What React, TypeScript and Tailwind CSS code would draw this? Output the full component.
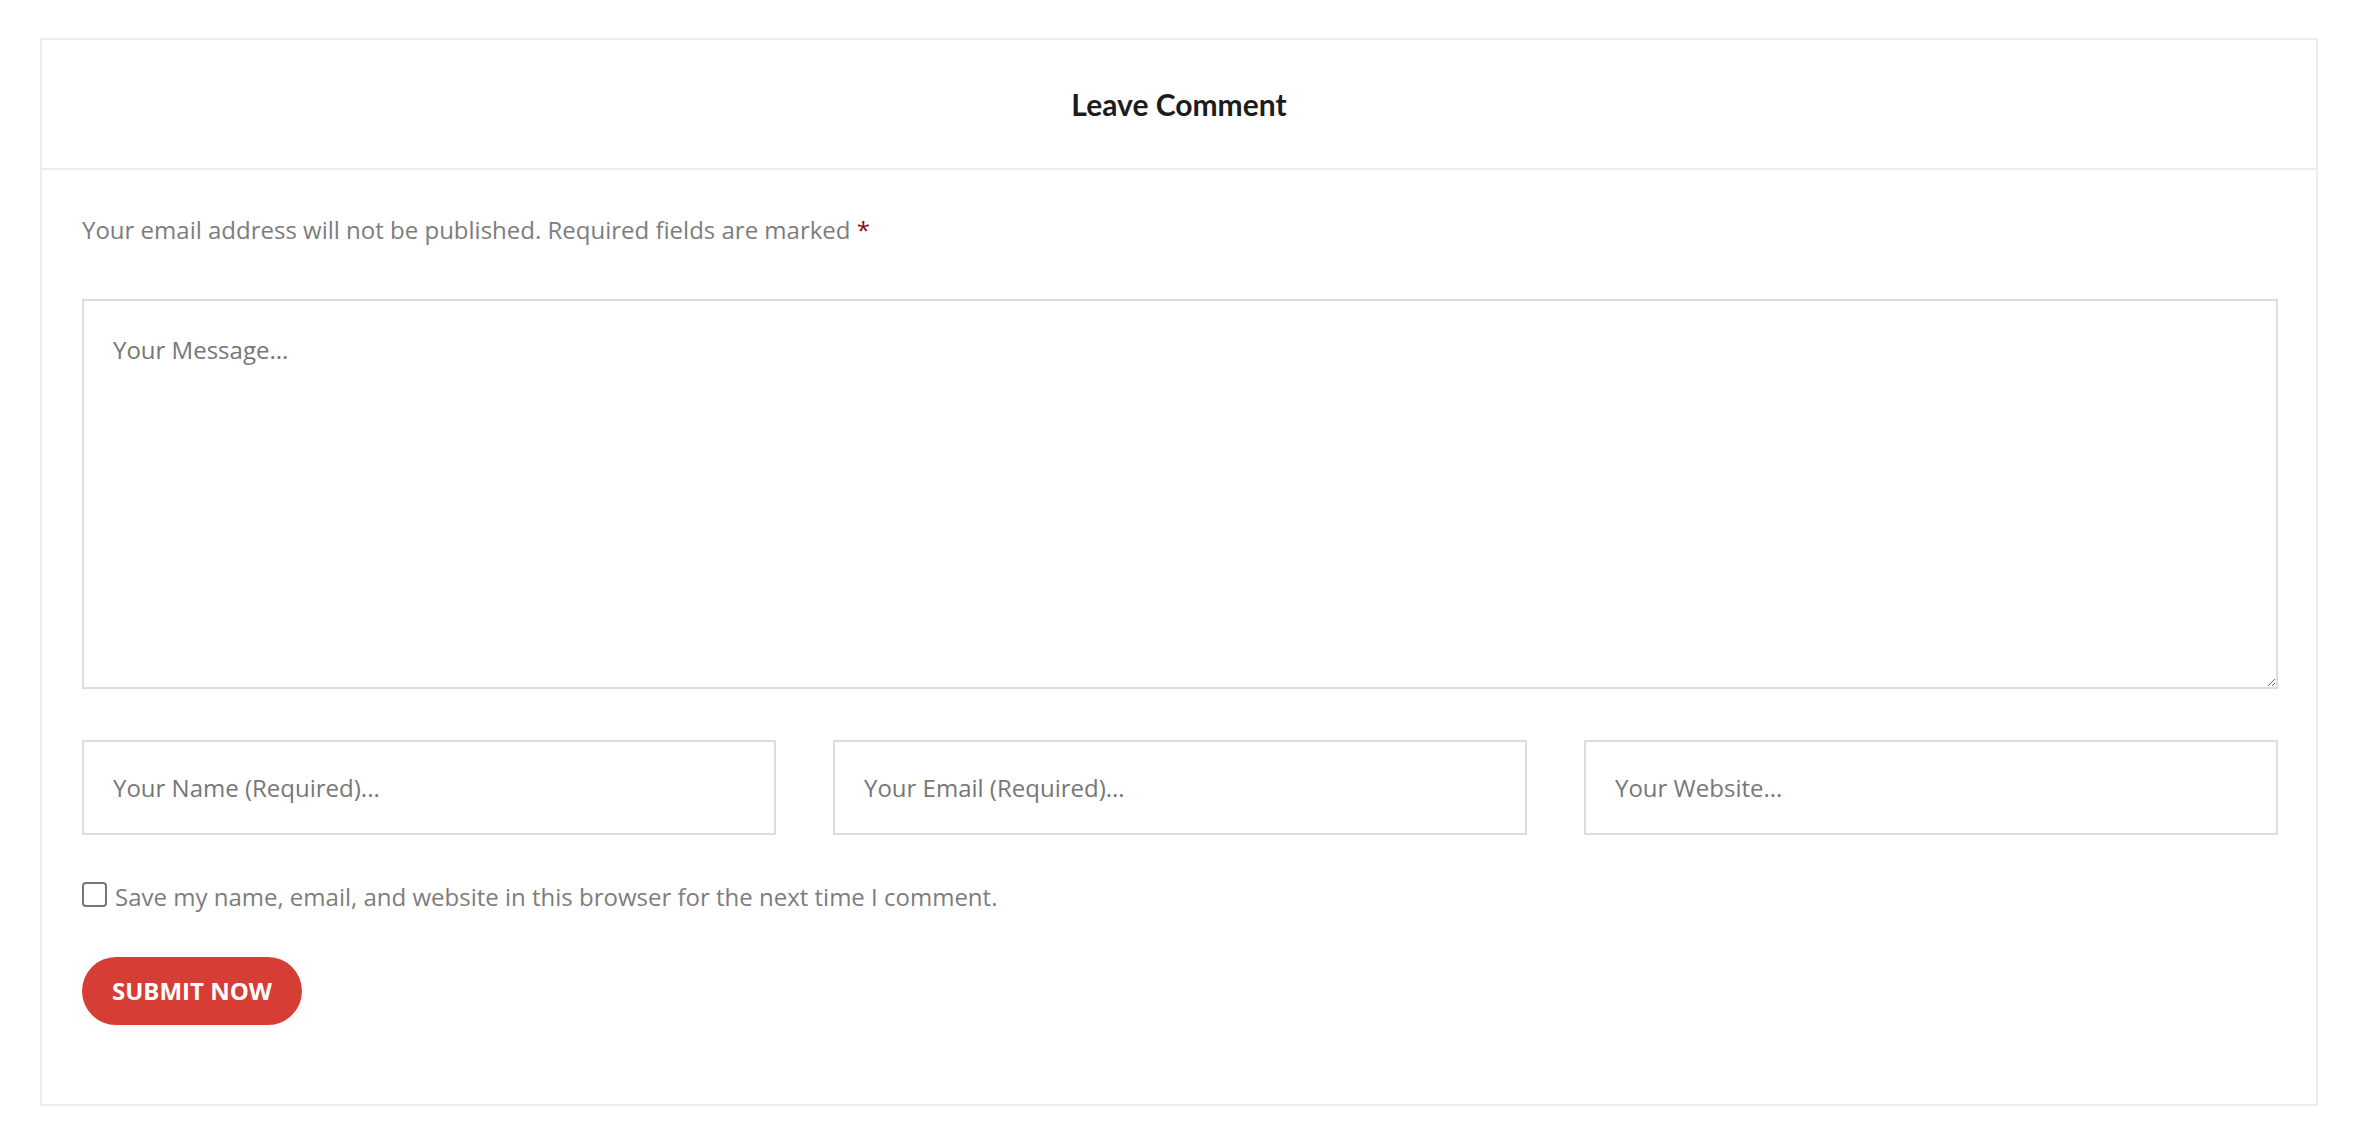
export default function App() {
  const body = { fontFamily: '"Open Sans", "Noto Sans", sans-serif' };

  return (
    <div className="min-h-[1138px] bg-white pt-[38px] pl-[40px] pr-[48px] pb-[31px]" style={body}>
      <div className="border-2 border-[#ededed]">
        <div className="flex h-[130px] items-center justify-center border-b-2 border-[#ededed]">
          <h2
            className="text-[30px] font-bold text-[#1c1c1c]"
            style={{ fontFamily: 'Lato, "Noto Sans", sans-serif' }}
          >
            Leave Comment
          </h2>
        </div>

        <form className="pl-[40px] pr-[38px] pt-[42px] pb-[79px]" onSubmit={(e) => e.preventDefault()}>
          <p className="text-[24px] leading-[36px] text-[#7d7d7d]">
            Your email address will not be published. Required fields are marked{" "}
            <span className="text-[#8b0a0a]">*</span>
          </p>

          <textarea
            placeholder="Your Message..."
            className="mt-[51px] block h-[390px] w-full border-2 border-[#dddddd] px-[29px] pt-[31px] text-[24px] leading-[36px] text-[#555] outline-none placeholder:text-[#777]"
          />

          <div className="mt-[51px] grid grid-cols-3 gap-[57px]">
            <Field placeholder="Your Name (Required)..." />
            <Field placeholder="Your Email (Required)..." />
            <Field placeholder="Your Website..." />
          </div>

          <label className="mt-[46px] flex items-center gap-[8px] text-[24px] leading-[32px] text-[#7d7d7d]">
            <input
              type="checkbox"
              className="h-[25px] w-[25px] shrink-0 appearance-none rounded-[4px] border-2 border-[#767676] bg-white -mt-[6px]"
            />
            <span>Save my name, email, and website in this browser for the next time I comment.</span>
          </label>

          <button
            type="submit"
            className="mt-[44px] flex h-[68px] w-[220px] items-center justify-center rounded-full bg-[#d63d35] text-[24px] font-bold uppercase text-white"
          >
            Submit Now
          </button>
        </form>
      </div>
    </div>
  );
}

function Field({ placeholder }: { placeholder: string }) {
  return (
    <input
      type="text"
      placeholder={placeholder}
      className="h-[95px] w-full border-2 border-[#dddddd] px-[29px] text-[24px] text-[#555] outline-none placeholder:text-[#777]"
    />
  );
}
